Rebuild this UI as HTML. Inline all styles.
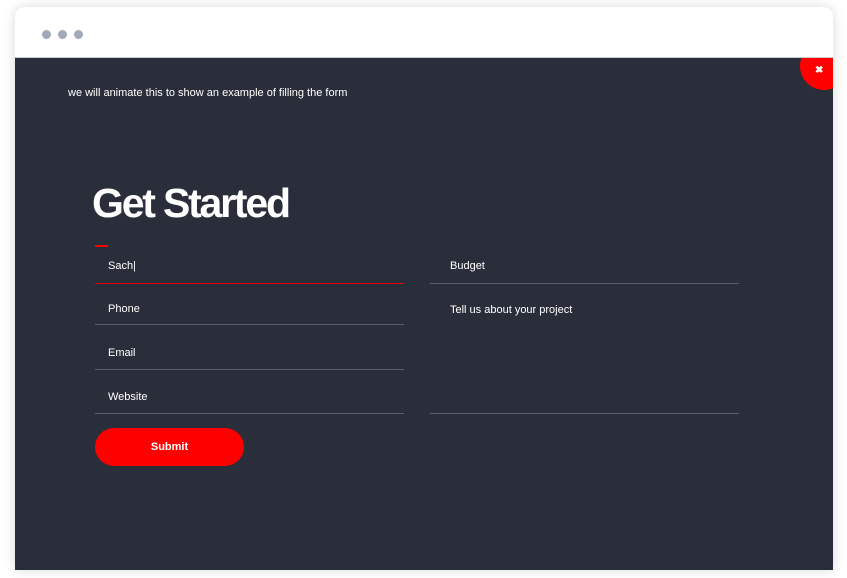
<!DOCTYPE html>
<html><head><style>
body{margin:0;width:847px;height:578px;background:#fff;font-family:"Liberation Sans",sans-serif;overflow:hidden;position:relative}
.win{position:absolute;left:15px;top:7px;width:818px;height:563px;border-radius:10px 10px 0 0;box-shadow:0 0 12px rgba(0,0,0,.15);background:#fff;overflow:hidden}
.bar{height:50px;background:#fff;border-bottom:1px solid #c8cbd2}
.dot{position:absolute;top:23px;width:9px;height:9px;border-radius:50%;background:#a1a8b8}
.main{position:absolute;left:0;top:51px;width:818px;height:512px;background:#2a2e3a;color:#fff;overflow:hidden}
.close{position:absolute;left:785px;top:-16px;width:48px;height:48px;border-radius:50%;background:#f00;}
.close span{position:absolute;left:15px;top:23px;font-size:10px;font-weight:bold}
.note{position:absolute;left:53px;top:29px;font-size:11px}
h1{position:absolute;left:77px;top:122px;margin:0;font-size:41px;letter-spacing:-2.2px;font-weight:900}
.f{position:absolute;width:309px;border-bottom:1px solid #5a5e6a;font-size:11px}
.f span{position:absolute;left:13px;top:-19px}
.btn{position:absolute;left:80px;top:370px;width:149px;height:38px;border-radius:19px;background:#f00;font-size:11px;font-weight:bold;text-align:center;line-height:38px}
</style></head><body>
<div class="win">
<div class="bar"></div>
<div class="dot" style="left:27px"></div><div class="dot" style="left:43px"></div><div class="dot" style="left:59px"></div>
<div class="main">
<div class="close"><span>✖</span></div>
<div class="note">we will animate this to show an example of filling the form</div>
<h1>Get Started</h1>
<div style="position:absolute;left:80px;top:187px;width:13px;height:2px;background:#f00"></div>
<div class="f" style="left:80px;top:225px;border-bottom:1px solid #d00"><span style="top:-23px">Sach|</span></div>
<div class="f" style="left:80px;top:266px"><span style="top:-21px">Phone</span></div>
<div class="f" style="left:80px;top:311px"><span style="top:-22px">Email</span></div>
<div class="f" style="left:80px;top:355px"><span style="top:-22px">Website</span></div>
<div class="f" style="left:415px;top:225px"><span style="left:20px;top:-23px">Budget</span></div>
<div class="f" style="left:415px;top:355px"><span style="left:20px;top:-109px">Tell us about your project</span></div>
<div class="btn">Submit</div>
</div></div>
</body></html>
